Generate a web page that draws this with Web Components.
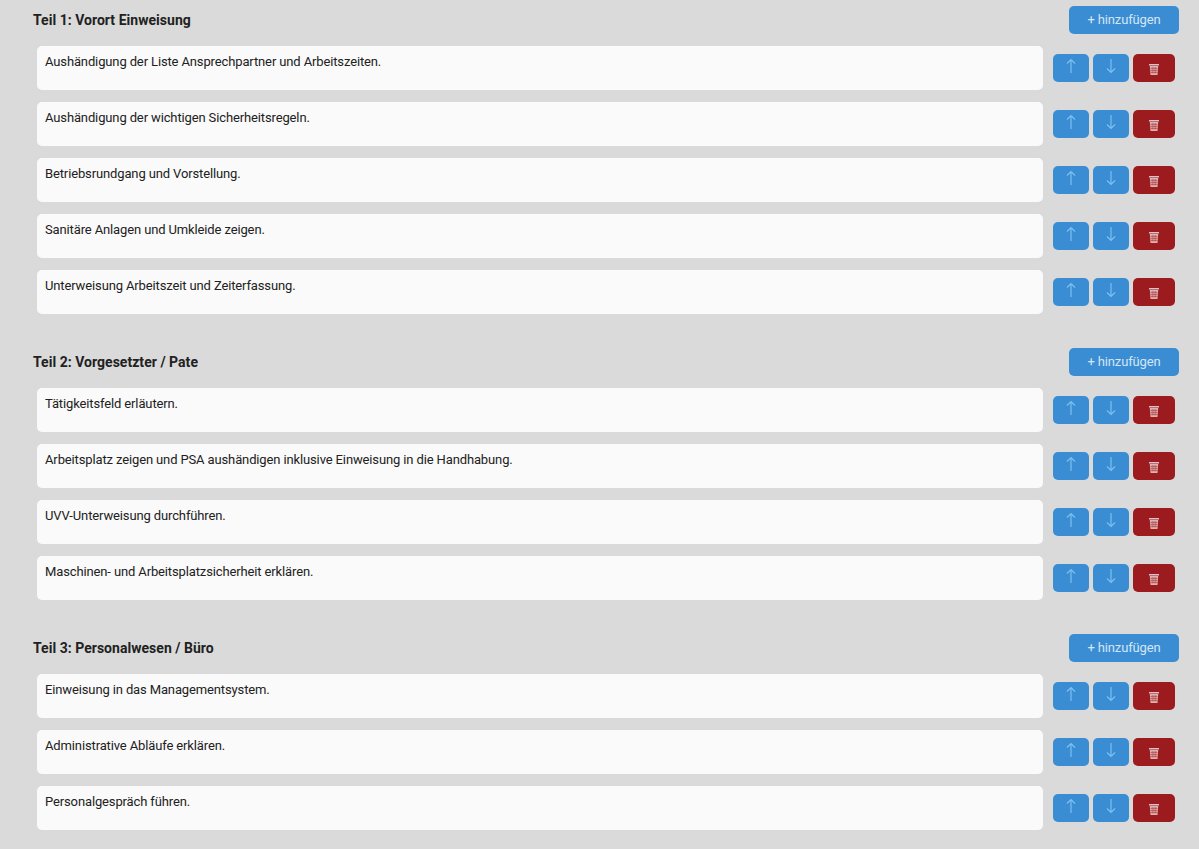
<!DOCTYPE html>
<html lang="de">
<head>
<meta charset="utf-8">
<title>Einweisung</title>
<style>
  html, body { margin: 0; background: #dadada; }
  body { font-family: Roboto, "Liberation Sans", sans-serif; color: #212121; height: 849px; overflow: hidden; }
  .page { display: block; padding: 6px 20px 0 33px; }
</style>
</head>
<body>
<template id="sectionTemplate">
  <style>
    :host { display: block; margin-bottom: 34px; }
    .head { display: flex; justify-content: space-between; align-items: center; height: 28px; margin-bottom: 12px; }
    h2 { margin: 0; font: bold 14px/20px Roboto, sans-serif; letter-spacing: 0.03px; color: #212121; }
    .add { box-sizing: border-box; width: 110px; height: 28px; border: 0; padding: 0; border-radius: 5px; background: #3a8dd3; color: #d5e6f5; font: 13px/28px Roboto, sans-serif; letter-spacing: -0.15px; }
    .rows { display: flex; flex-direction: column; gap: 12px; }
  </style>
  <div class="head">
    <h2></h2>
    <button class="add">+ hinzufügen</button>
  </div>
  <div class="rows"><slot></slot></div>
</template>

<template id="rowTemplate">
  <style>
    :host { display: flex; align-items: center; height: 44px; padding-left: 4px; }
    .text { box-sizing: border-box; flex: 0 0 1006px; height: 44px; padding: 6px 8px; border-radius: 5px; background: #fafafa; font: 13px/20px Roboto, sans-serif; letter-spacing: -0.13px; color: #212121; }
    .actions { display: flex; gap: 4px; margin-left: 10px; }
    button { display: flex; align-items: center; justify-content: center; box-sizing: border-box; width: 36px; height: 28px; border: 0; padding: 0; border-radius: 5px; background: #3a8dd3; }
    button.del { width: 42px; background: #9b1b1e; }
    svg { display: block; }
  </style>
  <div class="text"><slot></slot></div>
  <div class="actions">
    <button aria-label="nach oben">
      <svg width="10" height="16" viewBox="0 0 10 16" fill="none" stroke="#7cc0f0" stroke-width="1.2" style="margin-top:-4px"><path d="M5 15V1.5M1 5.5L5 1.5L9 5.5"/></svg>
    </button>
    <button aria-label="nach unten">
      <svg width="10" height="16" viewBox="0 0 10 16" fill="none" stroke="#7cc0f0" stroke-width="1.2" style="margin-top:-4px"><path d="M5 1V14.5M1 10.5L5 14.5L9 10.5"/></svg>
    </button>
    <button class="del" aria-label="löschen">
      <svg width="10" height="11" viewBox="0 0 10 11" style="margin-top:3px"><path d="M0 0H10V1.5H0Z" fill="#dcc0d0"/><path d="M0.8 2H9.2L8.5 11H1.5Z" fill="#dfb0ac"/><path d="M3.2 3V9.5M5 3V9.5M6.8 3V9.5M1.5 4.5H8.5M1.5 6.5H8.5M1.5 8.5H8.5" stroke="#a83a40" stroke-width=".55" fill="none"/></svg>
    </button>
  </div>
</template>

<div class="page">
  <task-section title-text="Teil 1: Vorort Einweisung">
    <task-row>Aushändigung der Liste Ansprechpartner und Arbeitszeiten.</task-row>
    <task-row>Aushändigung der wichtigen Sicherheitsregeln.</task-row>
    <task-row>Betriebsrundgang und Vorstellung.</task-row>
    <task-row>Sanitäre Anlagen und Umkleide zeigen.</task-row>
    <task-row>Unterweisung Arbeitszeit und Zeiterfassung.</task-row>
  </task-section>
  <task-section title-text="Teil 2: Vorgesetzter / Pate">
    <task-row>Tätigkeitsfeld erläutern.</task-row>
    <task-row>Arbeitsplatz zeigen und PSA aushändigen inklusive Einweisung in die Handhabung.</task-row>
    <task-row>UVV-Unterweisung durchführen.</task-row>
    <task-row>Maschinen- und Arbeitsplatzsicherheit erklären.</task-row>
  </task-section>
  <task-section title-text="Teil 3: Personalwesen / Büro">
    <task-row>Einweisung in das Managementsystem.</task-row>
    <task-row>Administrative Abläufe erklären.</task-row>
    <task-row>Personalgespräch führen.</task-row>
  </task-section>
</div>

<script>
customElements.define("task-section", class TaskSection extends HTMLElement {
  constructor() {
    super();
    const content = document.getElementById("sectionTemplate").content;
    this.attachShadow({ mode: "open" }).appendChild(content.cloneNode(true));
    this.shadowRoot.querySelector("h2").textContent = this.getAttribute("title-text");
  }
});

customElements.define("task-row", class TaskRow extends HTMLElement {
  constructor() {
    super();
    const content = document.getElementById("rowTemplate").content;
    this.attachShadow({ mode: "open" }).appendChild(content.cloneNode(true));
  }
});
</script>
</body>
</html>
